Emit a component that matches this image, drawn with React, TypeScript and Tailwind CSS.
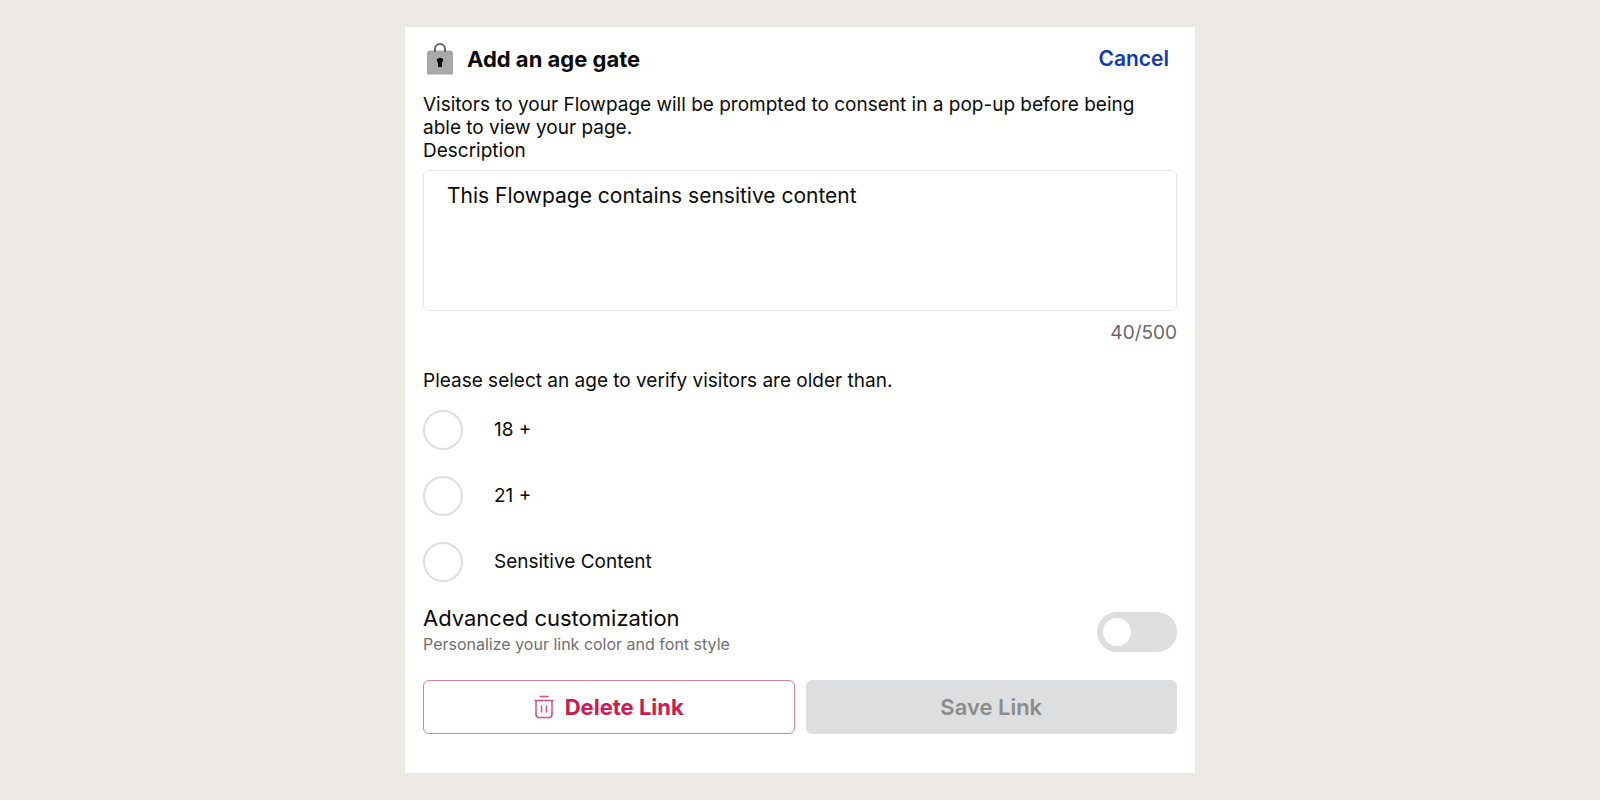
import { useState } from "react";

const ages = ["18 +", "21 +", "Sensitive Content"];

function LockIcon() {
  return (
    <svg width="26" height="32" viewBox="0 0 26 32" fill="none" aria-hidden="true">
      <path d="M0 10.500a3 3 0 0 1 3-3h20a3 3 0 0 1 3 3v21H0z" fill="#a9a9a9" />
      <path d="M8 9V6a5 5 0 0 1 10 0V9" stroke="#666" strokeWidth="2" />
      <path d="M9.800 17.500a3.200 2.700 0 1 1 5.200 2V24h-4v-4.500a3 3 0 0 1-1.200-2z" fill="#000" />
    </svg>
  );
}

function TrashIcon() {
  return (
    <svg width="20" height="24" viewBox="0 0 20 24" fill="none" stroke="#d4527a" strokeWidth="1.500" aria-hidden="true">
      <path d="M5.500 1.500h9M0.500 5.500h19M2 5.500v14a3 3 0 0 0 3 3h10a3 3 0 0 0 3-3V5.500M7.500 10.500v7M12.500 10.500v7" />
    </svg>
  );
}

export default function App() {
  const [text, setText] = useState("This Flowpage contains sensitive content");
  const [age, setAge] = useState("");
  const [advanced, setAdvanced] = useState(false);

  return (
    <main className="min-h-screen bg-[#edeae5] px-4 py-[27px] font-[Inter,sans-serif] text-[#0a0a0a]">
      <form className="mx-auto w-full max-w-[790px] bg-white px-[18px] pt-4 pb-[39px]" onSubmit={(e) => e.preventDefault()}>
        <header className="flex items-center justify-between pr-2 pl-1">
          <div className="flex items-center gap-[14px]">
            <LockIcon />
            <h1 className="text-[22px] leading-8 font-bold">Add an age gate</h1>
          </div>
          <button type="button" className="text-[21px] leading-8 font-semibold text-[#1239ad]">Cancel</button>
        </header>

        <p className="mt-[18px] text-[19px] leading-[23px]">
          Visitors to your Flowpage will be prompted to consent in a pop-up before being able to view your page.
        </p>
        <label htmlFor="description" className="block text-[19px] leading-[23px]">Description</label>
        <textarea
          id="description"
          maxLength={500}
          value={text}
          onChange={(e) => setText(e.target.value)}
          className="mt-2 block h-[141px] w-full resize-none rounded-md border border-[#e6e6e6] px-[23px] py-[11px] text-[21px] leading-7"
        />
        <p className="mt-2 text-right text-[19px] leading-7 text-[#686868]">{text.length}/500</p>

        <fieldset className="mt-5">
          <legend className="text-[19px] leading-7">Please select an age to verify visitors are older than.</legend>
          <div className="mt-[15px] flex flex-col gap-[26px]">
            {ages.map((label) => (
              <label key={label} className="flex items-center gap-[31px] text-[19px] leading-7">
                <input
                  type="radio"
                  name="age"
                  checked={age === label}
                  onChange={() => setAge(label)}
                  className="size-10 shrink-0 appearance-none rounded-full border-2 border-[#dedede] bg-white checked:border-[12px] checked:border-[#1239ad]"
                />
                {label}
              </label>
            ))}
          </div>
        </fieldset>

        <div className="mt-[22px] flex items-end justify-between">
          <div>
            <label htmlFor="advanced" className="block text-[22px] leading-7">Advanced customization</label>
            <p className="text-base leading-6 text-[#6f6f6f]">Personalize your link color and font style</p>
          </div>
          <input
            id="advanced"
            type="checkbox"
            role="switch"
            checked={advanced}
            onChange={(e) => setAdvanced(e.target.checked)}
            className="mb-1 flex h-10 w-20 shrink-0 appearance-none items-center rounded-full bg-[#dcdee0] px-[6px] before:size-7 before:rounded-full before:bg-white checked:justify-end checked:bg-[#1239ad]"
          />
        </div>

        <div className="mt-6 grid grid-cols-2 gap-[11px]">
          <button type="button" className="flex h-[54px] items-center justify-center gap-[11px] rounded-md border border-[#dc7f98] text-[22px] font-bold text-[#d31850]">
            <TrashIcon />
            Delete Link
          </button>
          <button type="submit" disabled className="h-[54px] rounded-md bg-[#dcdee0] text-[22px] font-semibold text-[#8b8b8b]">Save Link</button>
        </div>
      </form>
    </main>
  );
}
